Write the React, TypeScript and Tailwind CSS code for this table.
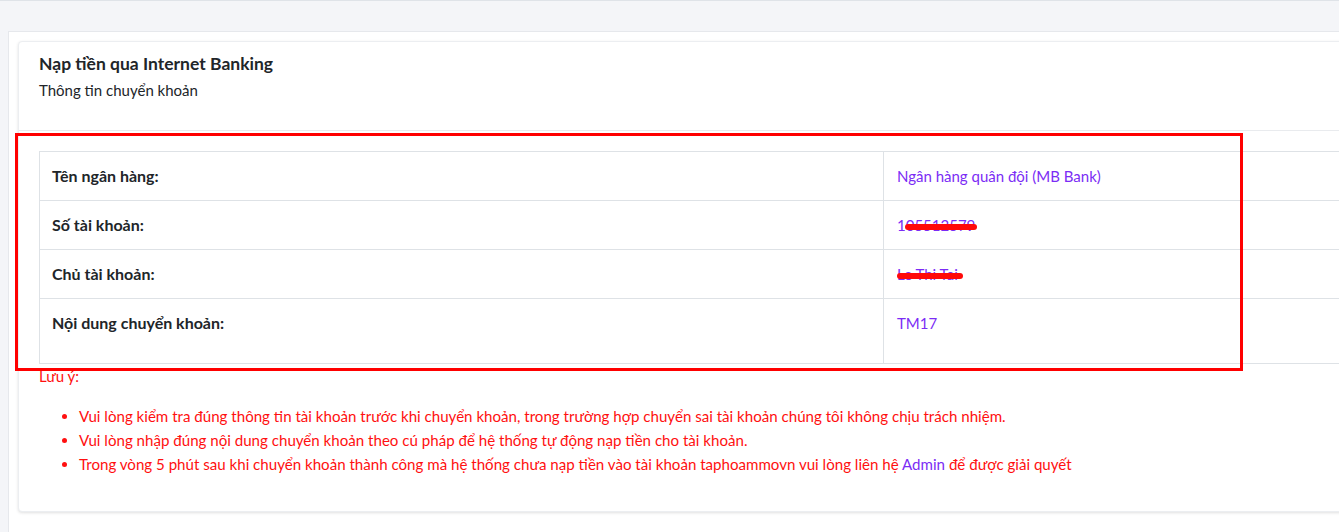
const rows = [
  { label: "Tên ngân hàng:", value: "Ngân hàng quân đội (MB Bank)" },
  { label: "Số tài khoản:", value: "105512579", redact: "left-[8px] w-[72px]" },
  { label: "Chủ tài khoản:", value: "Le Thi Tai", redact: "left-0 w-[66px]" },
  { label: "Nội dung chuyển khoản:", value: "TM17", tall: true },
];

export default function App() {
  return (
    <div className="relative h-[532px] w-full overflow-hidden border-t border-[#dfe3e8] bg-[#f4f5f8] font-['Lato',sans-serif]">
      {/* outer panel */}
      <div className="ml-2 mt-[30px] w-[1800px] border border-[#e6e8ec] bg-white pl-[9px] pt-[9px] pb-10">
        <div className="w-[1760px] rounded-[4px] border border-[#eceef1] bg-white shadow-[0_1px_3px_rgba(0,0,0,0.12)]">
          <div className="border-b border-[#e9ebee] px-[20px] pt-[11px] pb-[30px]">
            <h3 className="text-[17.5px] font-bold leading-[22px] text-[#212529]">Nạp tiền qua Internet Banking</h3>
            <p className="mt-[5px] text-[15px] leading-[20px] text-[#212529]">Thông tin chuyển khoản</p>
          </div>
          <div className="px-[20px] pt-[20px] pb-[35px]">
            <table className="w-[1688px] border-collapse border border-[#dee2e6] text-[15px]">
              <tbody>
                {rows.map((r) => (
                  <tr key={r.label} className={r.tall ? "h-[65px]" : "h-[49px]"}>
                    <td className={`w-[844px] border border-[#dee2e6] px-3 text-[16px] font-bold text-[#212529] ${r.tall ? "pb-[16px]" : ""}`}>
                      {r.label}
                    </td>
                    <td className={`border border-[#dee2e6] px-[13px] text-[#7b2cf5] ${r.tall ? "pb-[16px]" : ""}`}>
                      <span className="relative">
                        {r.value}
                        {r.redact && (
                          <span className={`absolute top-[8px] h-[6px] rounded-full bg-[#ff0a0a] ${r.redact}`} />
                        )}
                      </span>
                    </td>
                  </tr>
                ))}
              </tbody>
            </table>
            <p className="mt-[2px] text-[15px] leading-[20px] text-[#ff1010]">Lưu ý:</p>
            <ul className="mt-[18px] list-disc pl-[40px] text-[15.1px] leading-[24px] text-[#ff1010] marker:text-[#ff1010]">
              <li>
                Vui lòng kiểm tra đúng thông tin tài khoản trước khi chuyển khoản, trong trường hợp chuyển sai tài khoản chúng tôi không chịu trách nhiệm.
              </li>
              <li>Vui lòng nhập đúng nội dung chuyển khoản theo cú pháp để hệ thống tự động nạp tiền cho tài khoản.</li>
              <li>
                Trong vòng 5 phút sau khi chuyển khoản thành công mà hệ thống chưa nạp tiền vào tài khoản taphoammovn vui lòng liên hệ{" "}
                <span className="text-[#7b2cf5]">Admin</span> để được giải quyết
              </li>
            </ul>
          </div>
        </div>
      </div>
      {/* annotation rectangle */}
      <div className="pointer-events-none absolute left-[15px] top-[132px] h-[238px] w-[1228px] border-[3px] border-[#ff0000]" />
    </div>
  );
}
